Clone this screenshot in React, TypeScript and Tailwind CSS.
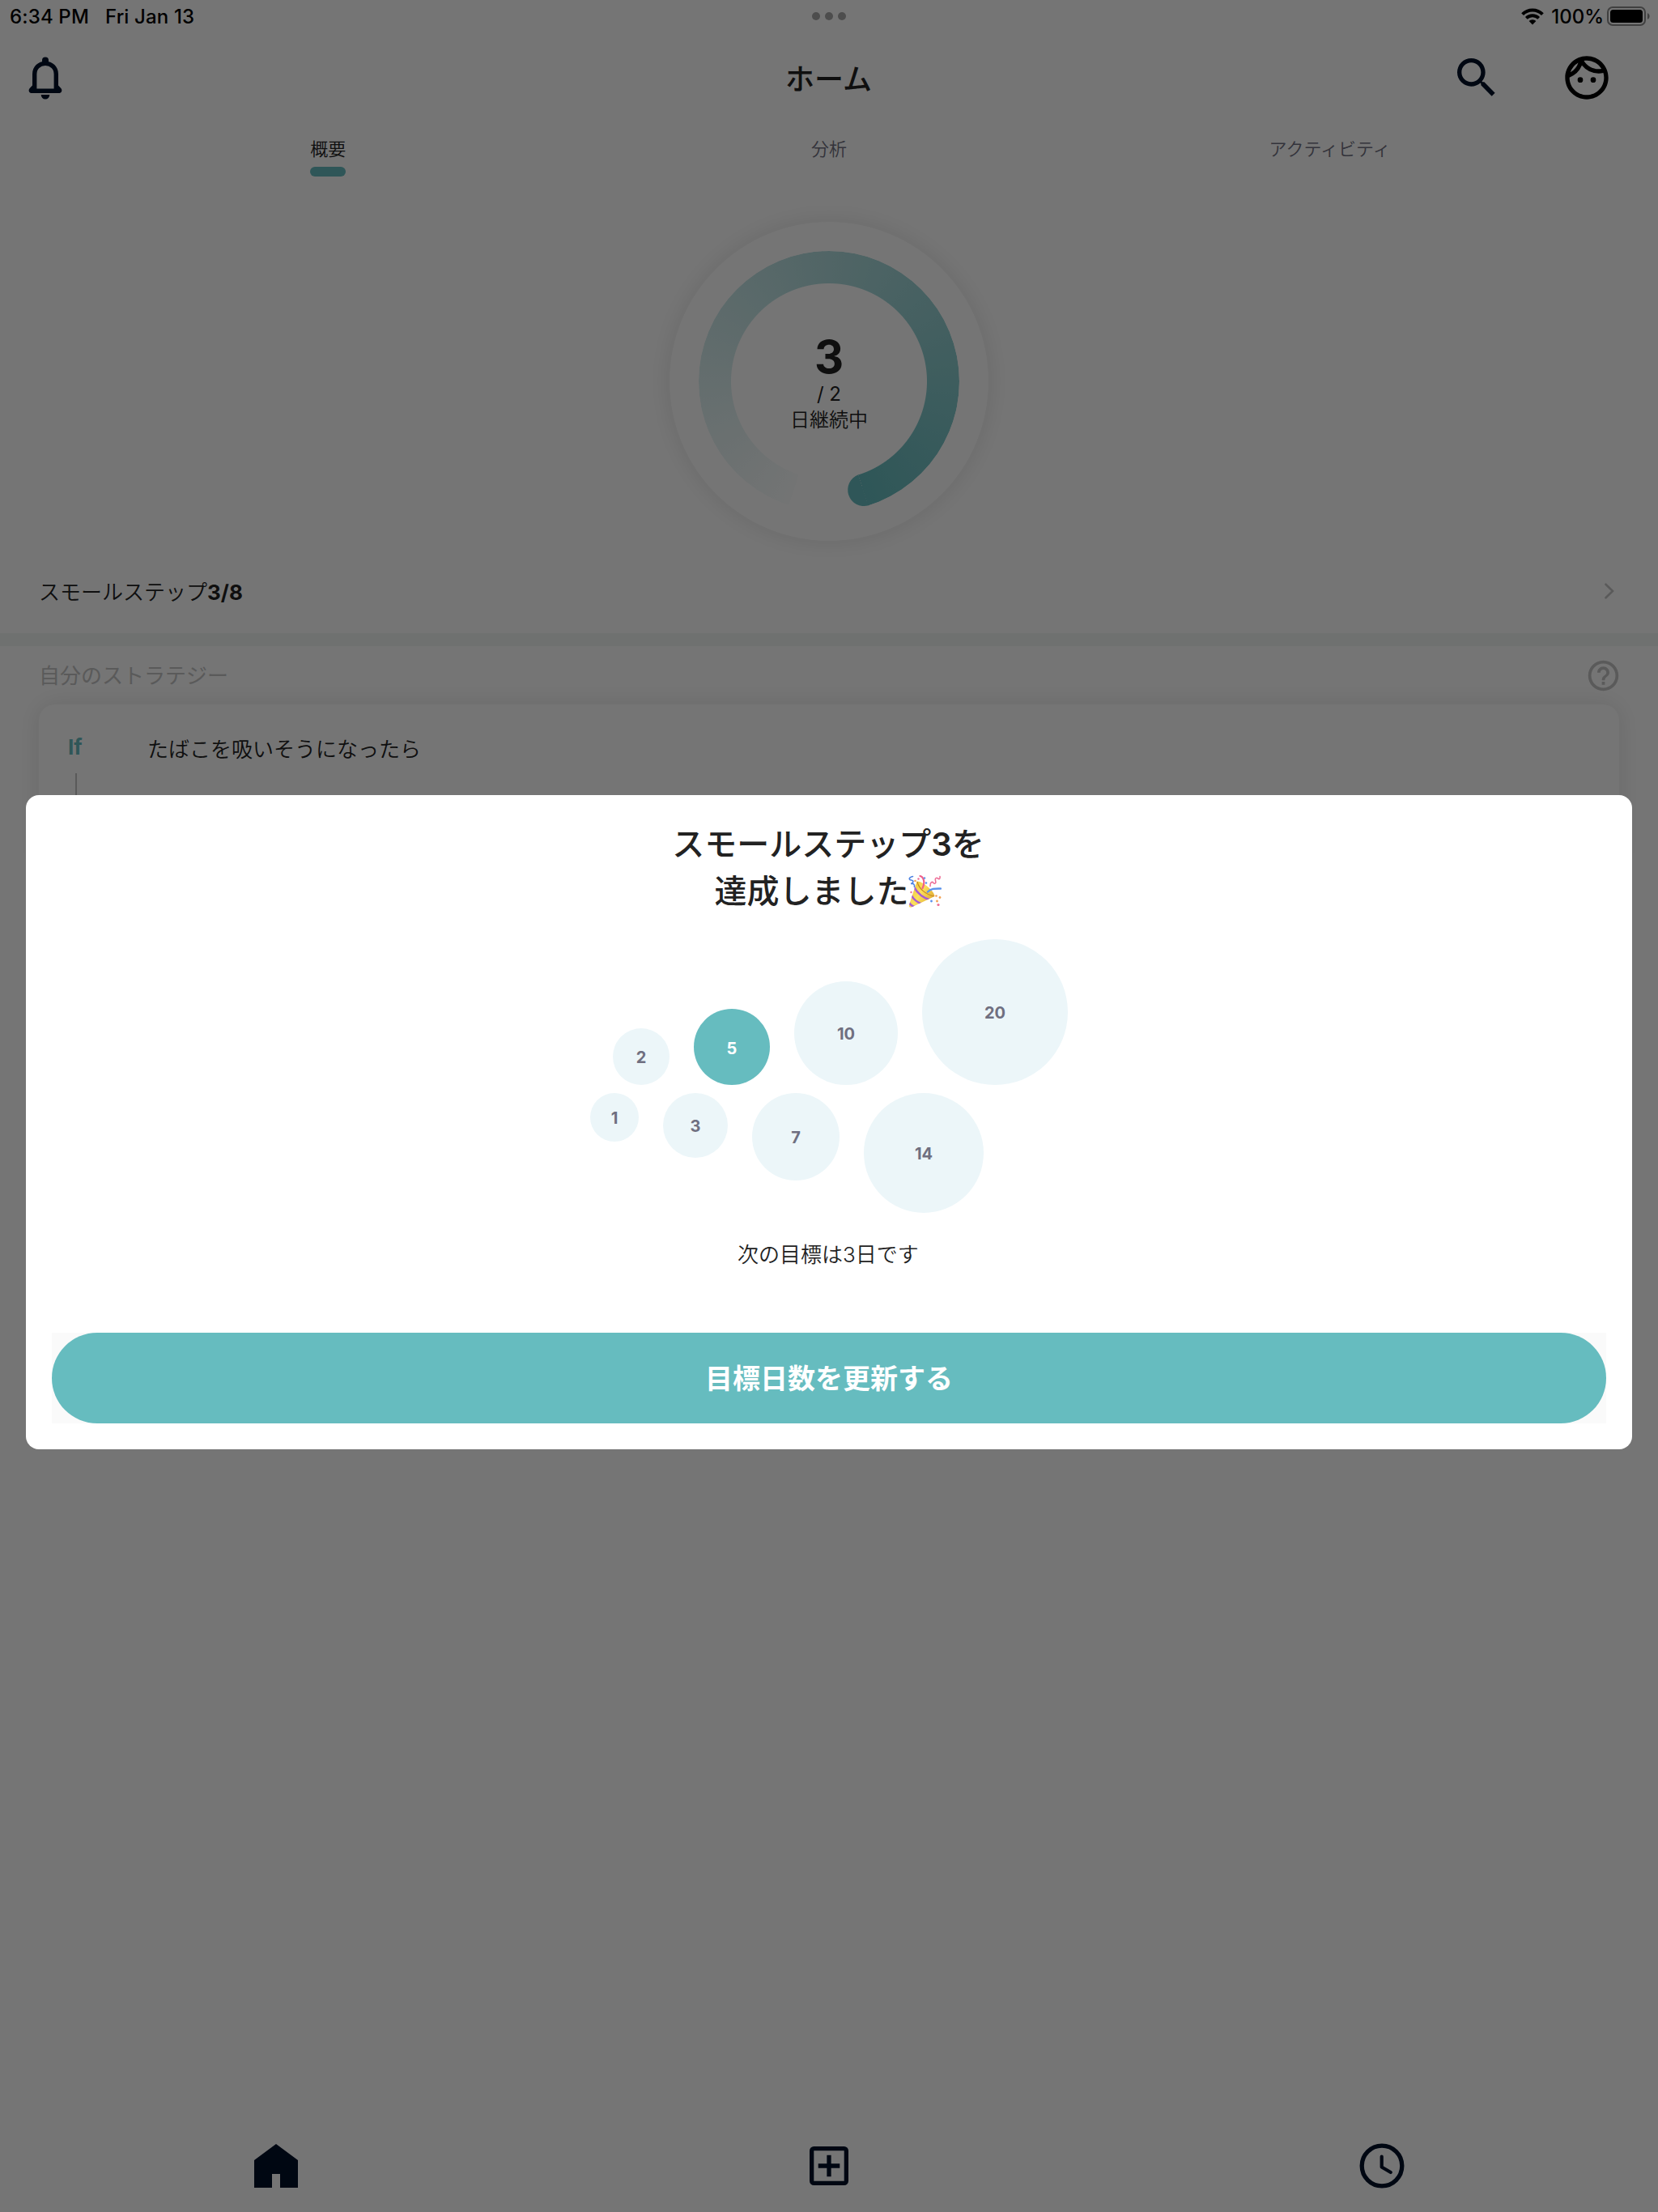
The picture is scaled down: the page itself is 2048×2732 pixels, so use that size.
import React from "react";
import { MdHelpOutline, MdOutlineFace, MdSearch } from "react-icons/md";

const smallBubbles = [
  { label: "1", size: 60 },
  { label: "3", size: 80 },
  { label: "7", size: 108 },
  { label: "14", size: 148 },
];

const largeBubbles = [
  { label: "2", size: 70 },
  { label: "5", size: 94, active: true },
  { label: "10", size: 128 },
  { label: "20", size: 180 },
];

function Bubble({ label, size, active }: { label: string; size: number; active?: boolean }) {
  return (
    <div
      className={`flex shrink-0 items-center justify-center rounded-full text-[20px] leading-none font-bold ${
        active ? "bg-[#66bcbf] pt-[4px] text-white" : "bg-[#ecf6f9] pt-[2px] text-[#6f6f80]"
      }`}
      style={{ width: size, height: size }}
    >
      {label}
    </div>
  );
}

function StatusBar() {
  return (
    <div className="flex h-[40px] items-center justify-between pr-[9px] pl-[12px] text-[24px] leading-none font-medium text-black">
      <div className="flex w-[600px] gap-[20px] pt-px tracking-[0.15px]">
        <span>6:34 PM</span>
        <span>Fri Jan 13</span>
      </div>
      <div className="mr-[3px] flex gap-[6px]">
        <span className="size-[10px] rounded-full bg-[#a8a8a8]" />
        <span className="size-[10px] rounded-full bg-[#a8a8a8]" />
        <span className="size-[10px] rounded-full bg-[#a8a8a8]" />
      </div>
      <div className="flex w-[600px] items-center justify-end">
        <svg width="28" height="21" viewBox="0 0 28 21" className="mr-[9px]">
          <path d="M1.6 7.6a17.6 17.6 0 0 1 24.8 0" fill="none" stroke="#000" strokeWidth="4" />
          <path d="M6.3 12.4a11 11 0 0 1 15.4 0" fill="none" stroke="#000" strokeWidth="3.8" />
          <path d="M9.6 16.1a6.3 6.3 0 0 1 8.8 0L14 20.6z" fill="#000" />
        </svg>
        <span className="mr-[4px] pt-px">100%</span>
        <svg width="54" height="24" viewBox="0 0 54 24">
          <rect x="1" y="1" width="46" height="22" rx="6" fill="none" stroke="#8c8c8c" strokeWidth="2" />
          <rect x="4" y="4" width="40" height="16" rx="3.5" fill="#000" />
          <path d="M50 8.2c3.400 1 3.400 6.600 0 7.600z" fill="#8c8c8c" />
        </svg>
      </div>
    </div>
  );
}

function Header() {
  return (
    <div className="flex h-[112px] items-center justify-between pr-[56px] pl-[24px]">
      <div className="w-[231px]">
        <svg width="64" height="64" viewBox="0 0 64 64" fill="#001029">
          <path d="M28 13V10.500a4 4 0 0 1 8 0V13z" />
          <path d="M18.700 48V27.500C18.700 19.500 24.500 14.400 32 14.400S45.300 19.500 45.300 27.500V48" fill="none" stroke="#001029" strokeWidth="5.400" />
          <path d="M16 42.500v-1l-3.300 3.600C10.500 47.500 12 51 14.500 51h35c2.500 0 4-3.500 1.800-5.900L48 41.500v4H16z" />
          <path d="M26.700 53h10.600a5.300 5.600 0 0 1-10.600 0z" />
        </svg>
      </div>
      <h1 className="pt-[3px] text-[36px] leading-none font-medium text-[#222]">ホーム</h1>
      <div className="flex w-[200px] justify-between">
        <MdSearch size={64} color="#001029" />
        <MdOutlineFace size={64} color="#000" />
      </div>
    </div>
  );
}

function Tabs() {
  return (
    <div className="grid h-[122px] grid-cols-3 px-[96px] pt-[21px] text-[22px] leading-[22px] font-[350]">
      <div className="flex flex-col items-center gap-[11px] text-[#222]">
        概要
        <span className="h-[12px] w-[44px] rounded-full bg-[#66bcbf]" />
      </div>
      <div className="text-center text-[#6f6f80]">分析</div>
      <div className="text-center text-[#6f6f80]">アクティビティ</div>
    </div>
  );
}

function ProgressRing() {
  return (
    <div className="relative flex size-[394px] items-center justify-center rounded-full bg-white shadow-[0_0_30px_rgba(0,0,0,0.1)]">
      <div className="absolute inset-[36px] rounded-full bg-[conic-gradient(from_198deg,#fbfdfd_0deg,#66bcbf_324.5deg,transparent_324.5deg)] [mask-image:radial-gradient(circle,transparent_120.5px,#000_121.5px)]" />
      <svg className="absolute inset-0" width="394" height="394" viewBox="0 0 394 394">
        <path d="M233.300 312.300a20 20 0 0 0 12.400 38z" fill="#66bcbf" />
      </svg>
      <div className="flex flex-col items-center pt-[4px] text-[24px] text-[#222]">
        <span className="text-[56px] leading-[60px] font-bold">3</span>
        <span className="leading-[31px]">/ 2</span>
        <span className="leading-[33px] font-[350]">日継続中</span>
      </div>
    </div>
  );
}

function Strategy() {
  return (
    <div className="px-[48px] text-[26px]">
      <div className="flex h-[72px] items-center justify-between text-[#c4c4c4]">
        <span className="pt-px">自分のストラテジー</span>
        <MdHelpOutline size={45} className="-mr-[3px]" />
      </div>
      <div className="flex h-[200px] rounded-[20px] bg-white pl-[36px] shadow-[0_0_30px_rgba(0,0,0,0.1)]">
        <div className="flex w-[98px] flex-col pt-[37px]">
          <span className="leading-[32px] font-bold text-[#66bcbf]">If</span>
          <span className="mt-[16px] ml-[9px] w-[2px] flex-1 bg-[#c4c4c4]" />
        </div>
        <span className="pt-[38px] leading-[36px] font-[350] text-[#222]">たばこを吸いそうになったら</span>
      </div>
    </div>
  );
}

function BottomNav() {
  return (
    <div className="mt-auto grid h-[114px] grid-cols-3 place-items-center text-[#001029]">
      <svg width="54" height="54" viewBox="0 0 54 54" fill="currentColor">
        <path d="M27 0 54 20V54H32V37H22V54H0V20z" />
      </svg>
      <svg width="48" height="48" viewBox="0 0 48 48" fill="none" stroke="currentColor" strokeWidth="5.300">
        <rect x="2.650" y="2.650" width="42.700" height="42.700" rx="2.600" />
        <path d="M24 10.700v26.600M10.700 24h26.600" />
      </svg>
      <svg width="56" height="56" viewBox="-1 -1 56 56" fill="none" stroke="currentColor">
        <circle cx="27" cy="27" r="24.800" strokeWidth="5.300" />
        <path d="M26.700 15.500V28.500L37.800 35" strokeWidth="4.200" strokeLinecap="round" strokeLinejoin="round" />
      </svg>
    </div>
  );
}

function PartyPopper() {
  return (
    <svg width="41" height="41" viewBox="0 0 41 41" className="-mb-[1px]">
      <defs>
        <linearGradient id="cone" x1="0" y1="0" x2="1" y2="0.600">
          <stop offset="0" stopColor="#e9b22f" />
          <stop offset="0.500" stopColor="#fbe05c" />
          <stop offset="1" stopColor="#d99b25" />
        </linearGradient>
        <clipPath id="coneShape">
          <path d="M10.500 7.500C17 7 32 19 32.500 26L4 39.500C1.500 40.500.3 39 1 36.500z" />
        </clipPath>
      </defs>
      <g clipPath="url(#coneShape)">
        <rect width="41" height="41" fill="url(#cone)" />
        <path d="M7 14.500C11 22 18 28 28 31M3.500 24.500C7 31 12 34 18 36M0 33c2 3 4.500 5 8 6.500" fill="none" stroke="#a75bd3" strokeWidth="2.600" />
        <path d="M11 8C13 17 22 24 32 26" fill="none" stroke="#c88a22" strokeWidth="1.200" />
      </g>
      <path d="M17.500 16C21 9 19 2 14.500 1" fill="none" stroke="#f0608b" strokeWidth="2.200" strokeLinecap="round" />
      <path d="M24 20.500C28 16 34 16.500 40 16.500" fill="none" stroke="#5b92ec" strokeWidth="2.400" strokeLinecap="round" />
      <path d="M5.500 1.500c-5 1-5.500 4-2 4.500 4 .5 2.500 4-.5 4.500 3-.5 5 0 4.500 4" fill="none" stroke="#4d83e3" strokeWidth="1.600" strokeLinecap="round" />
      <path d="M27 13.500c-.5-5 2.500-6 4-4 2 2 3.500 0 2.500-3-1-3 1.500-4 3-2.500 2 1.500 3 0 2.500-2.500" fill="none" stroke="#ee6f98" strokeWidth="1.600" strokeLinecap="round" />
      <g fill="#f2a154">
        <circle cx="34.500" cy="25.500" r="1.300" />
        <circle cx="39" cy="27.500" r="1.400" />
        <circle cx="35.500" cy="32" r="1.400" />
        <circle cx="8.500" cy="7" r="1.300" />
      </g>
      <g fill="#ee6f98">
        <circle cx="37" cy="36.500" r="1.600" />
        <circle cx="12.500" cy="4.500" r="1.200" />
        <circle cx="3.500" cy="21" r="1.200" />
      </g>
      <g fill="#5b92ec">
        <circle cx="28.500" cy="32" r="1.400" />
        <circle cx="22" cy="9.500" r="1.300" />
        <circle cx="20" cy="3.500" r="1.200" />
      </g>
    </svg>
  );
}

function AchievementDialog() {
  return (
    <div className="absolute inset-0 bg-black/54 px-[32px] pt-[982px]">
      <div className="flex h-[808px] flex-col items-center rounded-[16px] bg-white px-[32px] pt-[32px] text-[#222]">
        <h2 className="flex flex-col items-center pr-[2px] text-[40px] leading-[58px] font-medium">
          <span>
            スモールステップ<span className="font-semibold">3</span>を
          </span>
          <span className="flex items-center">
            達成しました
            <PartyPopper />
          </span>
        </h2>
        <div className="mt-[30px] flex w-[590px] flex-col gap-[10px]">
          <div className="flex h-[180px] items-end justify-end gap-[30px]">
            {largeBubbles.map((b) => (
              <Bubble key={b.label} {...b} />
            ))}
          </div>
          <div className="flex h-[148px] items-start gap-[30px]">
            {smallBubbles.map((b) => (
              <Bubble key={b.label} {...b} />
            ))}
          </div>
        </div>
        <p className="mt-[33px] pr-[2px] text-[26px] leading-[38px] font-[350]">次の目標は3日です</p>
        <div className="mt-[77px] w-full bg-[#fafafa]">
          <button className="flex h-[112px] w-full items-center justify-center rounded-full bg-[#66bcbf] pt-[2px] text-[34px] leading-none font-bold text-white">
            目標日数を更新する
          </button>
        </div>
      </div>
    </div>
  );
}

export default function App() {
  return (
    <div className="relative flex h-[2732px] w-[2048px] flex-col overflow-hidden bg-white font-['Inter','Noto_Sans_CJK_JP',sans-serif]">
      <StatusBar />
      <Header />
      <Tabs />
      <div className="flex justify-center">
        <ProgressRing />
      </div>
      <div className="flex h-[114px] items-center justify-between pt-[12px] pr-[54px] pl-[48px] pb-0 text-[26px] text-[#222]">
        <span className="font-[350]">
          スモールステップ<span className="font-bold">3/8</span>
        </span>
        <svg width="12" height="20" viewBox="0 0 12 20" fill="none" stroke="#c4c4c4" strokeWidth="2.600" strokeLinecap="round" className="-mt-[2px]">
          <path d="M1.500 1.700 10 10l-8.500 8.300" />
        </svg>
      </div>
      <div className="h-[16px] bg-[#f1f7f5]" />
      <Strategy />
      <BottomNav />
      <AchievementDialog />
    </div>
  );
}
